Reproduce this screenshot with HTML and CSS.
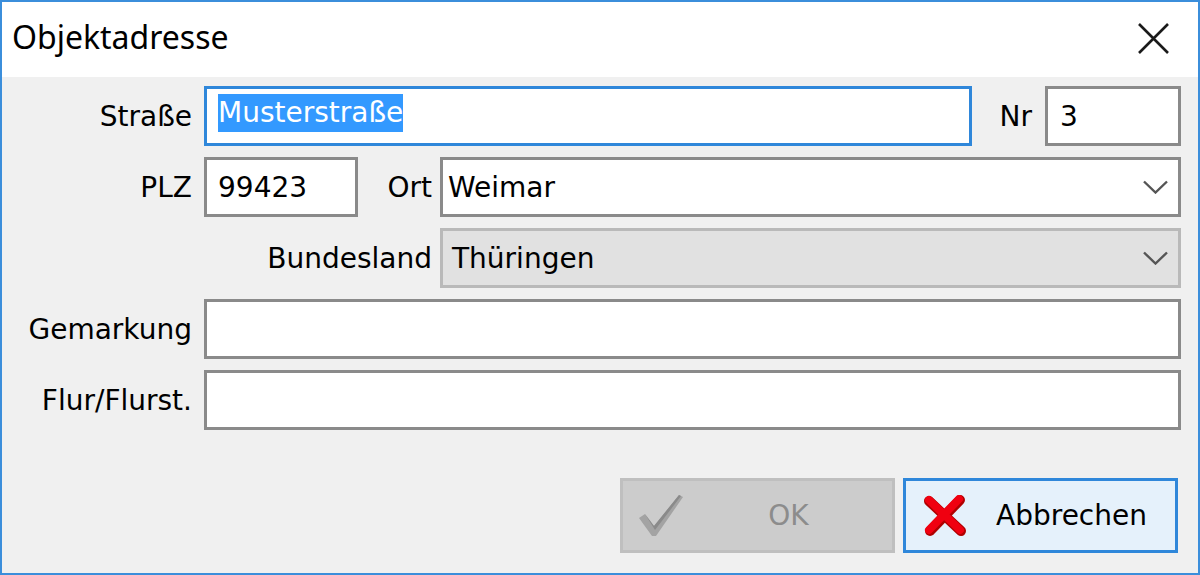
FILE: index.html
```html
<!DOCTYPE html>
<html lang="de">
<head>
    <meta charset="UTF-8">
    <title>Objektadresse</title>
    <link rel="stylesheet" href="styles.css">
</head>
<body>
    <div class="dialog">
        <div class="titlebar">
            <span class="title">Objektadresse</span>
            <span class="close">
                <svg width="31" height="31" viewBox="0 0 31 31"><path d="M1 1 L30 30 M30 1 L1 30" stroke="#1a1a1a" stroke-width="2.6" fill="none"/></svg>
            </span>
        </div>

        <div class="content">
            <div class="row">
                <span class="lbl">Straße</span>
                <div class="field focus grow"><span class="sel">Musterstraße</span></div>
                <span class="lbl-inline nr">Nr</span>
                <div class="field nr-field">3</div>
            </div>

            <div class="row">
                <span class="lbl">PLZ</span>
                <div class="field plz-field">99423</div>
                <span class="lbl-inline push">Ort</span>
                <div class="field combo">
                    <span class="combo-text">Weimar</span>
                    <svg class="chevron" width="25" height="14" viewBox="0 0 25 14"><path d="M1 1.5 L12.5 12.5 L24 1.5" stroke="#555" stroke-width="2.4" fill="none"/></svg>
                </div>
            </div>

            <div class="row">
                <span class="lbl-inline push">Bundesland</span>
                <div class="field combo disabled">
                    <span class="combo-text">Thüringen</span>
                    <svg class="chevron" width="25" height="14" viewBox="0 0 25 14"><path d="M1 1.5 L12.5 12.5 L24 1.5" stroke="#555" stroke-width="2.4" fill="none"/></svg>
                </div>
            </div>

            <div class="row">
                <span class="lbl">Gemarkung</span>
                <div class="field grow"></div>
            </div>

            <div class="row">
                <span class="lbl">Flur/Flurst.</span>
                <div class="field grow"></div>
            </div>

            <div class="buttons">
                <div class="btn btn-disabled">
                    <svg class="btn-icon" width="48" height="46" viewBox="0 0 48 46">
                        <path d="M2 25 L8 21 L17 33 L42 2 L46 4 L19 43 L15 43 Z" fill="#a3a3a3"/>
                        <path d="M8 21 L17 33 L42 2 L44 3 L18 37 Z" fill="#8a8a8a"/>
                    </svg>
                    <span class="btn-text">OK</span>
                </div>
                <div class="btn btn-default">
                    <svg class="btn-icon" width="46" height="42" viewBox="0 0 46 42">
                        <path d="M7 6 L39 36" stroke="#b00000" stroke-width="10" stroke-linecap="round"/>
                        <path d="M38 5 L8 36" stroke="#b00000" stroke-width="10" stroke-linecap="round"/>
                        <path d="M7 5 L38 35" stroke="#f00010" stroke-width="8" stroke-linecap="round"/>
                        <path d="M37 4 L7 35" stroke="#f00010" stroke-width="8" stroke-linecap="round"/>
                    </svg>
                    <span class="btn-text">Abbrechen</span>
                </div>
            </div>
        </div>
    </div>
</body>
</html>
```

FILE: styles.css
```css
/* Fenster */
body {
    margin: 0;
    padding: 0;
    width: 1200px;
    height: 575px;
    overflow: hidden;
    font-family: "DejaVu Sans", Verdana, sans-serif;
    font-size: 28px;
    color: #000;
}

.dialog {
    box-sizing: border-box;
    width: 1200px;
    height: 575px;
    border: 2px solid #3b8edb;
    display: flex;
    flex-direction: column;
    background: #fff;
}

/* Titelleiste */
.titlebar {
    height: 75px;
    display: flex;
    align-items: center;
    background: #fff;
}

.title {
    font-family: "Noto Sans", "Open Sans", sans-serif;
    font-size: 32px;
    padding-left: 10px;
    margin-top: -6px;
}

.close {
    margin-left: auto;
    margin-right: 29px;
    margin-top: -3px;
    display: flex;
}

/* Inhalt */
.content {
    flex: 1;
    background: #f0f0f0;
    padding: 9px 17px 20px 0;
    display: flex;
    flex-direction: column;
}

.row {
    display: flex;
    align-items: center;
    height: 60px;
    margin-bottom: 11px;
}

.lbl {
    width: 190px;
    text-align: right;
    margin-right: 12px;
    white-space: nowrap;
}

.lbl-inline {
    white-space: nowrap;
    margin-right: 8px;
}

.lbl-inline.nr {
    margin-left: 28px;
    margin-right: 13px;
}

.lbl-inline.push {
    margin-left: auto;
}

.field {
    box-sizing: border-box;
    height: 60px;
    border: 3px solid #8a8a8a;
    background: #fff;
    display: flex;
    align-items: center;
    padding-left: 11px;
    white-space: nowrap;
}

.field.grow {
    flex: 1;
}

.field.focus {
    border-color: #2f87da;
}

.sel {
    background: #3399ff;
    color: #fff;
    line-height: 38px;
    margin-top: -6px;
}

.nr-field {
    width: 136px;
    padding-left: 12px;
}

.plz-field {
    width: 154px;
    padding-left: 11px;
}

.combo {
    width: 741px;
    padding-left: 5px;
    padding-right: 10px;
}

.combo.disabled {
    background: #e1e1e1;
    border-color: #b9b9b9;
    padding-left: 9px;
}

.combo-text {
    flex: 1;
}

.chevron {
    display: block;
}

/* Schaltflächen */
.buttons {
    margin-top: auto;
    display: flex;
    justify-content: flex-end;
    gap: 8px;
    padding-right: 3px;
}

.btn {
    box-sizing: border-box;
    width: 275px;
    height: 75px;
    border: 3px solid #bfbfbf;
    display: flex;
    align-items: center;
    padding-left: 14px;
}

.btn-icon {
    display: block;
    flex: none;
}

.btn-text {
    flex: 1;
    text-align: center;
}

.btn-disabled {
    background: #cccccc;
    color: #8c8c8c;
}

.btn-default {
    background: #e5f1fb;
    border-color: #2f87da;
    padding-left: 16px;
}
```
